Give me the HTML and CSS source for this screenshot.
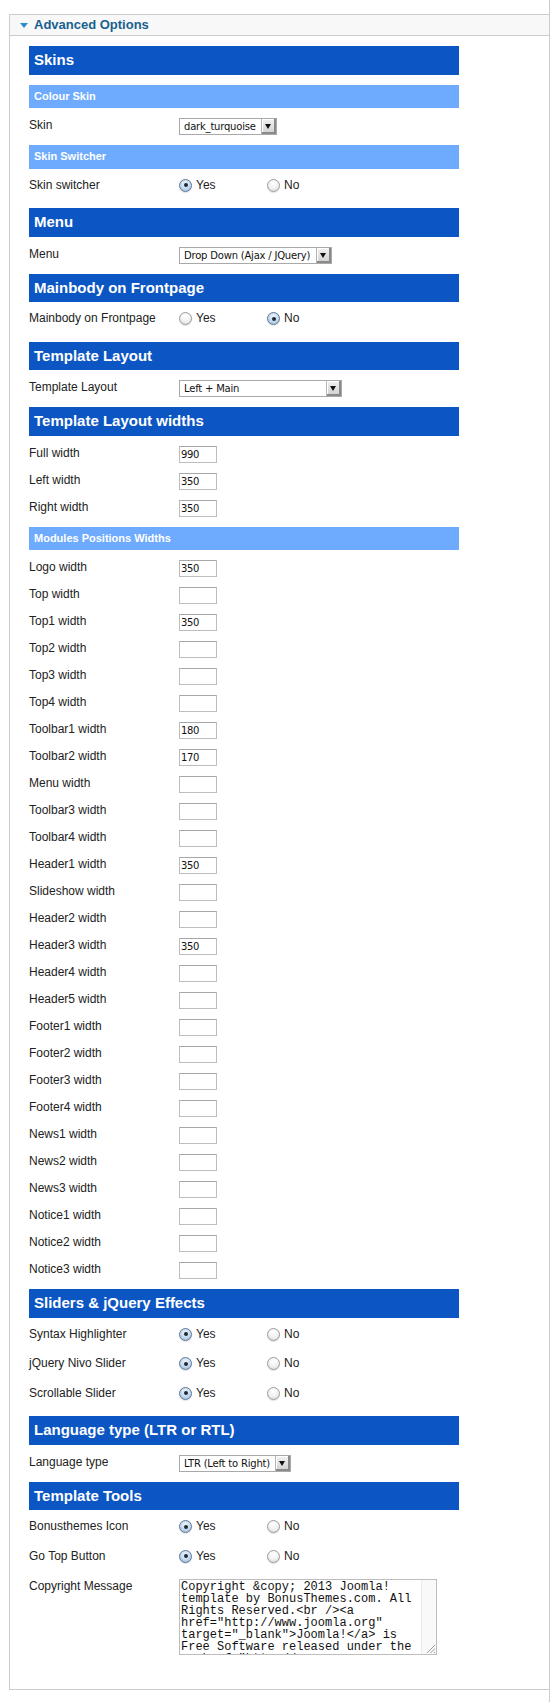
FILE: index.html
```html
<!DOCTYPE html>
<html>
<head>
<meta charset="utf-8">
<link rel="stylesheet" href="styles.css">
</head>
<body>
<div class="wrap">
  <div class="panel">
    <div class="panel-head"><span class="tri"></span><span class="panel-title">Advanced Options</span></div>
    <div class="content">
      <div class="bar">Skins</div>
      <div class="subbar">Colour Skin</div>
      <div class="row"><span class="label">Skin</span><div class="select w-skin"><span class="sel-text">dark_turquoise</span><span class="sel-btn"></span></div></div>
      <div class="subbar">Skin Switcher</div>
      <div class="row radio-row"><span class="label">Skin switcher</span><span class="opt"><span class="radio on"></span>Yes</span><span class="opt"><span class="radio"></span>No</span></div>

      <div class="bar">Menu</div>
      <div class="row"><span class="label">Menu</span><div class="select w-menu"><span class="sel-text">Drop Down (Ajax / JQuery)</span><span class="sel-btn"></span></div></div>

      <div class="bar">Mainbody on Frontpage</div>
      <div class="row radio-row"><span class="label">Mainbody on Frontpage</span><span class="opt"><span class="radio"></span>Yes</span><span class="opt"><span class="radio on"></span>No</span></div>

      <div class="bar">Template Layout</div>
      <div class="row"><span class="label">Template Layout</span><div class="select w-layout"><span class="sel-text">Left + Main</span><span class="sel-btn"></span></div></div>

      <div class="bar">Template Layout widths</div>
      <div class="row"><span class="label">Full width</span><span class="input">990</span></div>
      <div class="row"><span class="label">Left width</span><span class="input">350</span></div>
      <div class="row"><span class="label">Right width</span><span class="input">350</span></div>
      <div class="subbar">Modules Positions Widths</div>
      <div class="row"><span class="label">Logo width</span><span class="input">350</span></div>
      <div class="row"><span class="label">Top width</span><span class="input"></span></div>
      <div class="row"><span class="label">Top1 width</span><span class="input">350</span></div>
      <div class="row"><span class="label">Top2 width</span><span class="input"></span></div>
      <div class="row"><span class="label">Top3 width</span><span class="input"></span></div>
      <div class="row"><span class="label">Top4 width</span><span class="input"></span></div>
      <div class="row"><span class="label">Toolbar1 width</span><span class="input">180</span></div>
      <div class="row"><span class="label">Toolbar2 width</span><span class="input">170</span></div>
      <div class="row"><span class="label">Menu width</span><span class="input"></span></div>
      <div class="row"><span class="label">Toolbar3 width</span><span class="input"></span></div>
      <div class="row"><span class="label">Toolbar4 width</span><span class="input"></span></div>
      <div class="row"><span class="label">Header1 width</span><span class="input">350</span></div>
      <div class="row"><span class="label">Slideshow width</span><span class="input"></span></div>
      <div class="row"><span class="label">Header2 width</span><span class="input"></span></div>
      <div class="row"><span class="label">Header3 width</span><span class="input">350</span></div>
      <div class="row"><span class="label">Header4 width</span><span class="input"></span></div>
      <div class="row"><span class="label">Header5 width</span><span class="input"></span></div>
      <div class="row"><span class="label">Footer1 width</span><span class="input"></span></div>
      <div class="row"><span class="label">Footer2 width</span><span class="input"></span></div>
      <div class="row"><span class="label">Footer3 width</span><span class="input"></span></div>
      <div class="row"><span class="label">Footer4 width</span><span class="input"></span></div>
      <div class="row"><span class="label">News1 width</span><span class="input"></span></div>
      <div class="row"><span class="label">News2 width</span><span class="input"></span></div>
      <div class="row"><span class="label">News3 width</span><span class="input"></span></div>
      <div class="row"><span class="label">Notice1 width</span><span class="input"></span></div>
      <div class="row"><span class="label">Notice2 width</span><span class="input"></span></div>
      <div class="row"><span class="label">Notice3 width</span><span class="input"></span></div>

      <div class="bar">Sliders &amp; jQuery Effects</div>
      <div class="radio-group">
        <div class="row radio-row"><span class="label">Syntax Highlighter</span><span class="opt"><span class="radio on"></span>Yes</span><span class="opt"><span class="radio"></span>No</span></div>
        <div class="row radio-row"><span class="label">jQuery Nivo Slider</span><span class="opt"><span class="radio on"></span>Yes</span><span class="opt"><span class="radio"></span>No</span></div>
        <div class="row radio-row"><span class="label">Scrollable Slider</span><span class="opt"><span class="radio on"></span>Yes</span><span class="opt"><span class="radio"></span>No</span></div>
      </div>

      <div class="bar">Language type (LTR or RTL)</div>
      <div class="row"><span class="label">Language type</span><div class="select w-lang"><span class="sel-text">LTR (Left to Right)</span><span class="sel-btn"></span></div></div>

      <div class="bar">Template Tools</div>
      <div class="radio-group">
        <div class="row radio-row"><span class="label">Bonusthemes Icon</span><span class="opt"><span class="radio on"></span>Yes</span><span class="opt"><span class="radio"></span>No</span></div>
        <div class="row radio-row"><span class="label">Go Top Button</span><span class="opt"><span class="radio on"></span>Yes</span><span class="opt"><span class="radio"></span>No</span></div>
      </div>
      <div class="row ta-row"><span class="label">Copyright Message</span>
        <div class="textarea">
          <div class="ta-text">Copyright &amp;copy; 2013 Joomla! template by BonusThemes.com. All Rights Reserved.&lt;br /&gt;&lt;a href="http://www.joomla.org" target="_blank"&gt;Joomla!&lt;/a&gt; is Free Software released under the &lt;a href="http://<wbr>www.gnu.org/licenses/gpl-2.0.html" target="_blank"&gt;GNU General Public License.&lt;/a&gt;</div>
          <div class="ta-scroll">
            <svg class="grip" width="11" height="11" viewBox="0 0 11 11"><path d="M10 2 L2 10 M10 5.5 L5.5 10 M10 9 L9 10" stroke="#9a9a9a" stroke-width="1" fill="none"/></svg>
          </div>
        </div>
      </div>
    </div>
  </div>
</div>
</body>
</html>
```
FILE: styles.css
```css
html, body {
  margin: 0;
  padding: 0;
  background: #fff;
}
body {
  font-family: "Liberation Sans", Arial, sans-serif;
  color: #222;
}
.wrap {
  width: 550px;
  min-height: 1702px;
  box-sizing: border-box;
  border-right: 1px solid #cccccc;
  padding-top: 14px;
}
.panel {
  margin-left: 9px;
  border: 1px solid #cccccc;
  border-right: none;
}
.panel-head {
  height: 20px;
  background: #f8f8f8;
  border-bottom: 1px solid #cccccc;
  display: flex;
  align-items: center;
  padding-left: 10px;
}
.tri {
  width: 0;
  height: 0;
  border-left: 4.5px solid transparent;
  border-right: 4.5px solid transparent;
  border-top: 5px solid #2e8ccc;
  margin-right: 6px;
  margin-top: 1px;
}
.panel-title {
  font-weight: bold;
  font-size: 13px;
  color: #17608e;
  line-height: 20px;
}
.content {
  display: flex;
  flex-direction: column;
  gap: 10px;
  padding: 10px 0 34px 19px;
}
.bar {
  width: 430px;
  height: 28.5px;
  line-height: 28.5px;
  background: #0c56c4;
  color: #fff;
  font-weight: bold;
  font-size: 15px;
  padding-left: 5px;
  box-sizing: border-box;
}
.subbar {
  width: 430px;
  height: 23.5px;
  line-height: 23.5px;
  background: #6eaafe;
  color: #fff;
  font-weight: bold;
  font-size: 11px;
  padding-left: 5px;
  box-sizing: border-box;
}
.row {
  display: flex;
  align-items: flex-start;
  height: 17px;
}
.label {
  width: 150px;
  flex: none;
  font-size: 12px;
  line-height: 15px;
  color: #222;
}
.radio-row {
  height: 19.5px;
}
.radio-row .label {
  line-height: 13px;
}
.radio-group {
  display: flex;
  flex-direction: column;
  gap: 10px;
}
.opt {
  width: 88px;
  display: flex;
  align-items: center;
  gap: 4px;
  font-size: 12px;
  line-height: 13px;
  color: #222;
}
.radio {
  width: 13px;
  height: 13px;
  box-sizing: border-box;
  border-radius: 50%;
  border: 1px solid #9c9c9c;
  background: radial-gradient(circle at 50% 30%, #ffffff 0%, #f4f4f4 45%, #d6d6d6 100%);
  box-shadow: 0 1px 1px rgba(0,0,0,0.12);
  display: flex;
  align-items: center;
  justify-content: center;
}
.radio.on {
  border-color: #5c7896;
  background: radial-gradient(circle at 50% 35%, #eef5fc 0%, #c7dbef 50%, #8fb1d6 100%);
}
.radio.on::after {
  content: "";
  width: 4px;
  height: 4px;
  border-radius: 50%;
  background: #1e2a36;
}
.select {
  height: 17px;
  box-sizing: border-box;
  border: 1px solid #a9a9a9;
  background: #fff;
  display: flex;
  align-items: stretch;
  font-family: "DejaVu Sans", sans-serif;
  font-size: 10px;
  letter-spacing: -0.2px;
  color: #111;
}
.w-skin { width: 98px; }
.w-menu { width: 153px; }
.w-layout { width: 163px; }
.w-lang { width: 112px; }
.sel-text {
  flex: 1;
  padding-left: 4px;
  line-height: 15px;
  white-space: nowrap;
  overflow: hidden;
}
.sel-btn {
  width: 15px;
  flex: none;
  box-sizing: border-box;
  background: linear-gradient(#f2f2f2, #cfcfcf);
  border-left: 1px solid #b5b5b5;
  box-shadow: inset -2px -2px 0 #8a8a8a, inset 1px 1px 0 #ffffff;
  position: relative;
}
.sel-btn::after {
  content: "";
  position: absolute;
  left: 3px;
  top: 5px;
  border-left: 3.5px solid transparent;
  border-right: 3.5px solid transparent;
  border-top: 5px solid #111;
}
.input {
  width: 38px;
  height: 17px;
  box-sizing: border-box;
  border: 1px solid #bdbdbd;
  border-top-color: #a8a8a8;
  background: #fff;
  font-family: "DejaVu Sans", sans-serif;
  font-size: 10px;
  letter-spacing: -0.3px;
  line-height: 15px;
  padding-left: 1px;
  color: #111;
}
.ta-row {
  height: 76px;
}
.ta-row .label {
  line-height: 15px;
}
.textarea {
  width: 258px;
  height: 76px;
  box-sizing: border-box;
  border: 1px solid #bdbdbd;
  display: flex;
  background: #fff;
}
.ta-text {
  width: 241px;
  flex: none;
  padding: 1px 0 0 1px;
  box-sizing: border-box;
  overflow: hidden;
  font-family: "Liberation Mono", "Courier New", monospace;
  font-size: 12px;
  line-height: 12px;
  color: #111;
  word-break: normal;
}
.ta-scroll {
  flex: 1;
  background: #f9f9f9;
  border-left: 1px solid #ececec;
  position: relative;
}
.grip {
  position: absolute;
  right: 0;
  bottom: 0;
}
```
